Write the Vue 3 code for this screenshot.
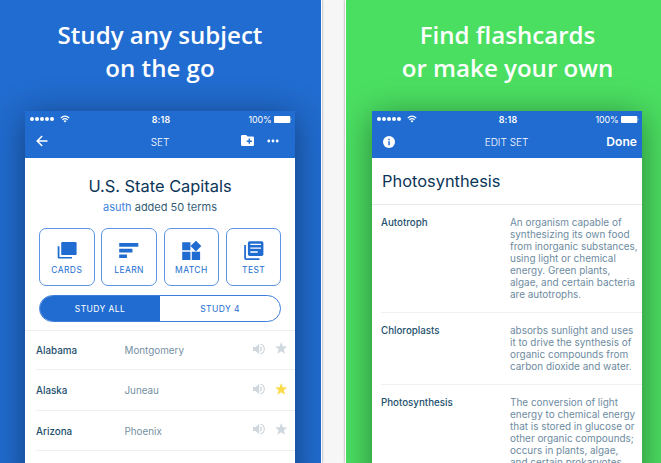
<script setup>
const modes = [
  { label: 'CARDS', icon: 'cards' },
  { label: 'LEARN', icon: 'learn' },
  { label: 'MATCH', icon: 'match' },
  { label: 'TEST', icon: 'test' },
]
const capitals = [
  { state: 'Alabama', city: 'Montgomery', starred: false },
  { state: 'Alaska', city: 'Juneau', starred: true },
  { state: 'Arizona', city: 'Phoenix', starred: false },
]
const terms = [
  {
    word: 'Autotroph',
    lines: ['An organism capable of', 'synthesizing its own food', 'from inorganic substances,', 'using light or chemical', 'energy. Green plants,', 'algae, and certain bacteria', 'are autotrophs.'],
  },
  {
    word: 'Chloroplasts',
    lines: ['absorbs sunlight and uses', 'it to drive the synthesis of', 'organic compounds from', 'carbon dioxide and water.'],
  },
  {
    word: 'Photosynthesis',
    lines: ['The conversion of light', 'energy to chemical energy', 'that is stored in glucose or', 'other organic compounds;', 'occurs in plants, algae,', 'and certain prokaryotes.'],
  },
]
</script>

<template>
  <main class="gallery">
    <section class="promo blue">
      <h1 class="headline">Study any subject<br />on the go</h1>
      <div class="phone">
        <header class="top">
          <div class="status">
            <span class="signal">
              <i v-for="n in 5" :key="n" class="dot"></i>
              <svg class="wifi" viewBox="0 0 10 8"><path d="M.8 3Q5-.9 9.2 3M2.4 4.8Q5 2.5 7.6 4.8" fill="none" stroke="#fff" stroke-width="1.2" /><path d="M3.5 5.9Q5 4.8 6.5 5.9L5 7.5Z" fill="#fff" /></svg>
            </span>
            <span class="clock">8:18</span>
            <span class="power">100%<svg class="battery" viewBox="0 0 18 7"><rect width="16.3" height="7" rx="1" fill="#fff" /><path d="M16.8 2.2q1.2 1.3 0 2.6z" fill="#fff" /></svg></span>
          </div>
          <nav class="bar">
            <svg class="back" viewBox="0 0 12 12"><path d="M11.5 6H1.4M6.2 1 1.2 6l5 5" fill="none" stroke="#fff" stroke-width="1.5" /></svg>
            <span class="bar-title">SET</span>
            <span class="actions">
              <svg class="folder" viewBox="0 0 13 11"><path d="M1.3 0h3.9l1.4 1.4h5.1Q13 1.4 13 2.7v7Q13 11 11.7 11H1.3Q0 11 0 9.7V1.3Q0 0 1.3 0Z" fill="#fff" /><path d="M8.3 3.6v5.2M5.7 6.2h5.2" stroke="#216cd0" stroke-width="1.4" /></svg>
              <svg class="more" viewBox="0 0 12 4"><g fill="#fff"><circle cx="1.8" cy="2" r="1.4" /><circle cx="6" cy="2" r="1.4" /><circle cx="10.2" cy="2" r="1.4" /></g></svg>
            </span>
          </nav>
        </header>
        <div class="intro">
          <h2 class="set-name">U.S. State Capitals</h2>
          <p class="byline"><span class="author">asuth</span> added 50 terms</p>
        </div>
        <div class="modes">
          <button v-for="m in modes" :key="m.label" class="mode">
            <svg class="mode-icon" viewBox="0 0 20 20" fill="#216cd0">
              <template v-if="m.icon === 'cards'"><rect x="4.3" y="1" width="15.7" height="13.4" rx="1.2" /><path d="M.7 5.4h1.8v11h12.8v1.5H2Q.7 17.9.7 16.6Z" /></template>
              <path v-else-if="m.icon === 'learn'" d="M.2 2h19.5v3.9H.2zM.2 8h13.5v3.7H.2zM.2 13.7h7.9v3.7H.2z" />
              <path v-else-if="m.icon === 'match'" d="M.2 1.2h8.4v8.3H.2zM.2 11h8.4v8.3H.2zM10 11h8.5v8.3H10zM14.2-.3l5.5 5.5-5.5 5.5-5.5-5.5z" />
              <template v-else><rect x="4" y=".2" width="15.8" height="15.2" rx="1.8" /><path d="M.2 4.2H2v13.5h13.8v1.8H2Q.2 19.5.2 17.7Z" /><path d="M6.4 3.4h11M6.4 7.3h11M6.4 11.2h7.6" stroke="#fff" stroke-width="1.4" /></template>
            </svg>
            <span>{{ m.label }}</span>
          </button>
        </div>
        <div class="toggle">
          <span class="option active">STUDY ALL</span>
          <span class="option">STUDY 4</span>
        </div>
        <ul class="capitals">
          <li v-for="c in capitals" :key="c.state" class="capital">
            <span class="state">{{ c.state }}</span>
            <span class="city">{{ c.city }}</span>
            <svg class="sound" viewBox="0 0 12 12"><path d="M0 4h2.6L6.2.8v10.4L2.6 8H0Z" fill="#cfd8de" /><path d="M7.4 3.7q2 2.3 0 4.6M7.5 1q3.8 1.4 3.8 5T7.5 11" fill="none" stroke="#cfd8de" stroke-width="1.2" /></svg>
            <svg class="star" :class="{ starred: c.starred }" viewBox="0 0 12 12"><path d="m6 0 1.5 4.1 4.4.2-3.4 2.8 1.2 4.3L6 9l-3.7 2.4 1.2-4.3L.1 4.3l4.4-.2Z" /></svg>
          </li>
        </ul>
      </div>
    </section>

    <section class="promo green">
      <h1 class="headline">Find flashcards<br />or make your own</h1>
      <div class="phone">
        <header class="top">
          <div class="status">
            <span class="signal">
              <i v-for="n in 5" :key="n" class="dot"></i>
              <svg class="wifi" viewBox="0 0 10 8"><path d="M.8 3Q5-.9 9.2 3M2.4 4.8Q5 2.5 7.6 4.8" fill="none" stroke="#fff" stroke-width="1.2" /><path d="M3.5 5.9Q5 4.8 6.5 5.9L5 7.5Z" fill="#fff" /></svg>
            </span>
            <span class="clock">8:18</span>
            <span class="power">100%<svg class="battery" viewBox="0 0 18 7"><rect width="16.3" height="7" rx="1" fill="#fff" /><path d="M16.8 2.2q1.2 1.3 0 2.6z" fill="#fff" /></svg></span>
          </div>
          <nav class="bar">
            <svg class="info" viewBox="0 0 12 12"><circle cx="6" cy="6" r="6" fill="#fff" /><path d="M5.3 2.8h1.5v1.4H5.3zM5.3 5.3h1.5v3.9H5.3z" fill="#216cd0" /></svg>
            <span class="bar-title">EDIT SET</span>
            <span class="done">Done</span>
          </nav>
        </header>
        <h2 class="edit-name">Photosynthesis</h2>
        <dl class="terms">
          <div v-for="t in terms" :key="t.word" class="term">
            <dt class="word">{{ t.word }}</dt>
            <dd class="definition"><span v-for="line in t.lines" :key="line" class="line">{{ line }}</span></dd>
          </div>
        </dl>
      </div>
    </section>
  </main>
</template>

<style>
body {
  background: #f6f6f6;
}
</style>

<style scoped>
.gallery {
  display: flex;
  gap: 23px;
  width: 661px;
  height: 463px;
  overflow: hidden;
  background: #f6f6f6;
  font-family: Inter, "Liberation Sans", sans-serif;
}
.gallery * {
  box-sizing: border-box;
}
svg {
  display: block;
  flex: none;
}
.promo {
  flex: none;
  height: 463px;
  overflow: hidden;
}
.blue {
  width: 322px;
  padding-left: 25px;
  background: #216cd0;
  border-right: 1px solid #fff;
  box-shadow: 0 0 2px rgba(0, 0, 0, 0.5);
}
.green {
  width: 330px;
  padding-left: 26px;
  background: #4bdf62;
  border-left: 1px solid #fff;
  box-shadow: 0 0 2px rgba(0, 0, 0, 0.5);
}
.headline {
  width: 270px;
  height: 111px;
  margin: 0;
  padding-top: 18px;
  color: #fff;
  font: 600 24.1px/33px "Open Sans", "Noto Sans", sans-serif;
  text-align: center;
  white-space: nowrap;
}
.green .headline {
  width: 271px;
}
.phone {
  width: 270px;
  height: 380px;
  background: #fff;
  box-shadow: 0 5px 32px rgba(0, 0, 0, 0.42);
}
.top {
  height: 46.5px;
  color: #fff;
  background: #216cd0;
}
.status {
  display: grid;
  grid-template-columns: 1fr auto 1fr;
  align-items: center;
  height: 16px;
  padding: 0 3.5px 0 4.5px;
  font-size: 8.9px;
}
.signal {
  display: flex;
  align-items: center;
  gap: 0.9px;
}
.dot {
  width: 4.2px;
  height: 4.2px;
  border-radius: 50%;
  background: #fff;
}
.wifi {
  width: 10px;
  height: 8px;
  margin-left: 5px;
}
.clock {
  padding-left: 1px;
  font-weight: 600;
  letter-spacing: 0.1px;
}
.power {
  display: flex;
  align-items: center;
  justify-content: flex-end;
  gap: 2px;
  letter-spacing: -0.1px;
}
.battery {
  width: 18px;
  height: 7px;
}
.bar {
  display: grid;
  grid-template-columns: 1fr auto 1fr;
  align-items: center;
  height: 29px;
  padding: 0 5px 0 11px;
}
.back {
  width: 12px;
  height: 12px;
  margin-top: -2px;
}
.bar-title {
  padding-right: 6px;
  font-size: 10px;
  font-weight: 300;
}
.green .bar-title {
  padding-right: 7px;
}
.actions {
  display: flex;
  align-items: center;
  justify-content: flex-end;
  gap: 13px;
  margin-top: -2px;
  padding-right: 11px;
}
.folder {
  width: 13px;
  height: 11px;
}
.more {
  width: 12px;
  height: 4px;
}
.info {
  width: 12px;
  height: 12px;
}
.done {
  font-size: 12.1px;
  font-weight: 600;
  text-align: right;
}
.intro {
  height: 70.5px;
  padding-top: 17px;
  text-align: center;
}
.set-name {
  margin: 0;
  color: #0b3557;
  font-size: 16.4px;
  font-weight: 400;
  line-height: 22px;
}
.byline {
  margin: 0;
  color: #365d78;
  font-size: 11px;
  line-height: 20px;
}
.author {
  color: #4383dc;
}
.modes {
  display: grid;
  grid-template-columns: repeat(4, 55.5px);
  gap: 6.8px;
  padding-left: 14px;
}
.mode {
  display: flex;
  flex-direction: column;
  align-items: center;
  height: 58px;
  padding: 12.3px 0 0;
  border: 1px solid #5b94e2;
  border-radius: 7px;
  color: #216cd0;
  background: #fff;
  font: 400 8.5px/12px Inter, sans-serif;
  letter-spacing: 0.4px;
}
.mode-icon {
  width: 19.6px;
  height: 19.6px;
  margin-bottom: 3.4px;
  overflow: visible;
}
.toggle {
  display: flex;
  width: 242px;
  height: 27px;
  margin: 9px 0 8px 14px;
  overflow: hidden;
  border: 1px solid #3c7dd8;
  border-radius: 14px;
}
.option {
  flex: 1;
  color: #216cd0;
  font-size: 8.5px;
  line-height: 26px;
  letter-spacing: 0.4px;
  text-align: center;
}
.active {
  color: #fff;
  background: #216cd0;
}
.capitals {
  margin: 0;
  padding: 0 0 0 11px;
  list-style: none;
  box-shadow: inset 0 1px #edf0f1;
}
.capital {
  display: grid;
  grid-template-columns: 88.5px 128px 22.5px 13px;
  align-items: center;
  height: 40.4px;
  padding-top: 0.8px;
  border-bottom: 1px solid #edf0f1;
  font-size: 9.85px;
}
.state {
  color: #23506d;
  font-weight: 500;
}
.city {
  color: #7590a3;
}
.sound {
  width: 12px;
  height: 12px;
  margin-top: -3px;
}
.star {
  width: 12.4px;
  height: 12.4px;
  margin-top: -3.5px;
  fill: #cfd8de;
}
.starred {
  fill: #fadc4b;
}
.edit-name {
  height: 47px;
  margin: 0;
  padding-left: 10px;
  border-bottom: 1px solid #e4e9eb;
  color: #0b3557;
  font-size: 16.4px;
  font-weight: 400;
  line-height: 47px;
}
.terms {
  margin: 0;
  padding-left: 9px;
}
.term {
  display: grid;
  grid-template-columns: 129px 1fr;
  padding: 11px 0 12px;
  border-bottom: 1px solid #edf0f1;
  font-size: 9.95px;
  line-height: 12px;
}
.word {
  padding-top: 1px;
  color: #23506d;
  font-size: 9.75px;
  font-weight: 500;
}
.definition {
  margin: 0;
  color: #6d8ba0;
  white-space: nowrap;
}
.line {
  display: block;
}
</style>
